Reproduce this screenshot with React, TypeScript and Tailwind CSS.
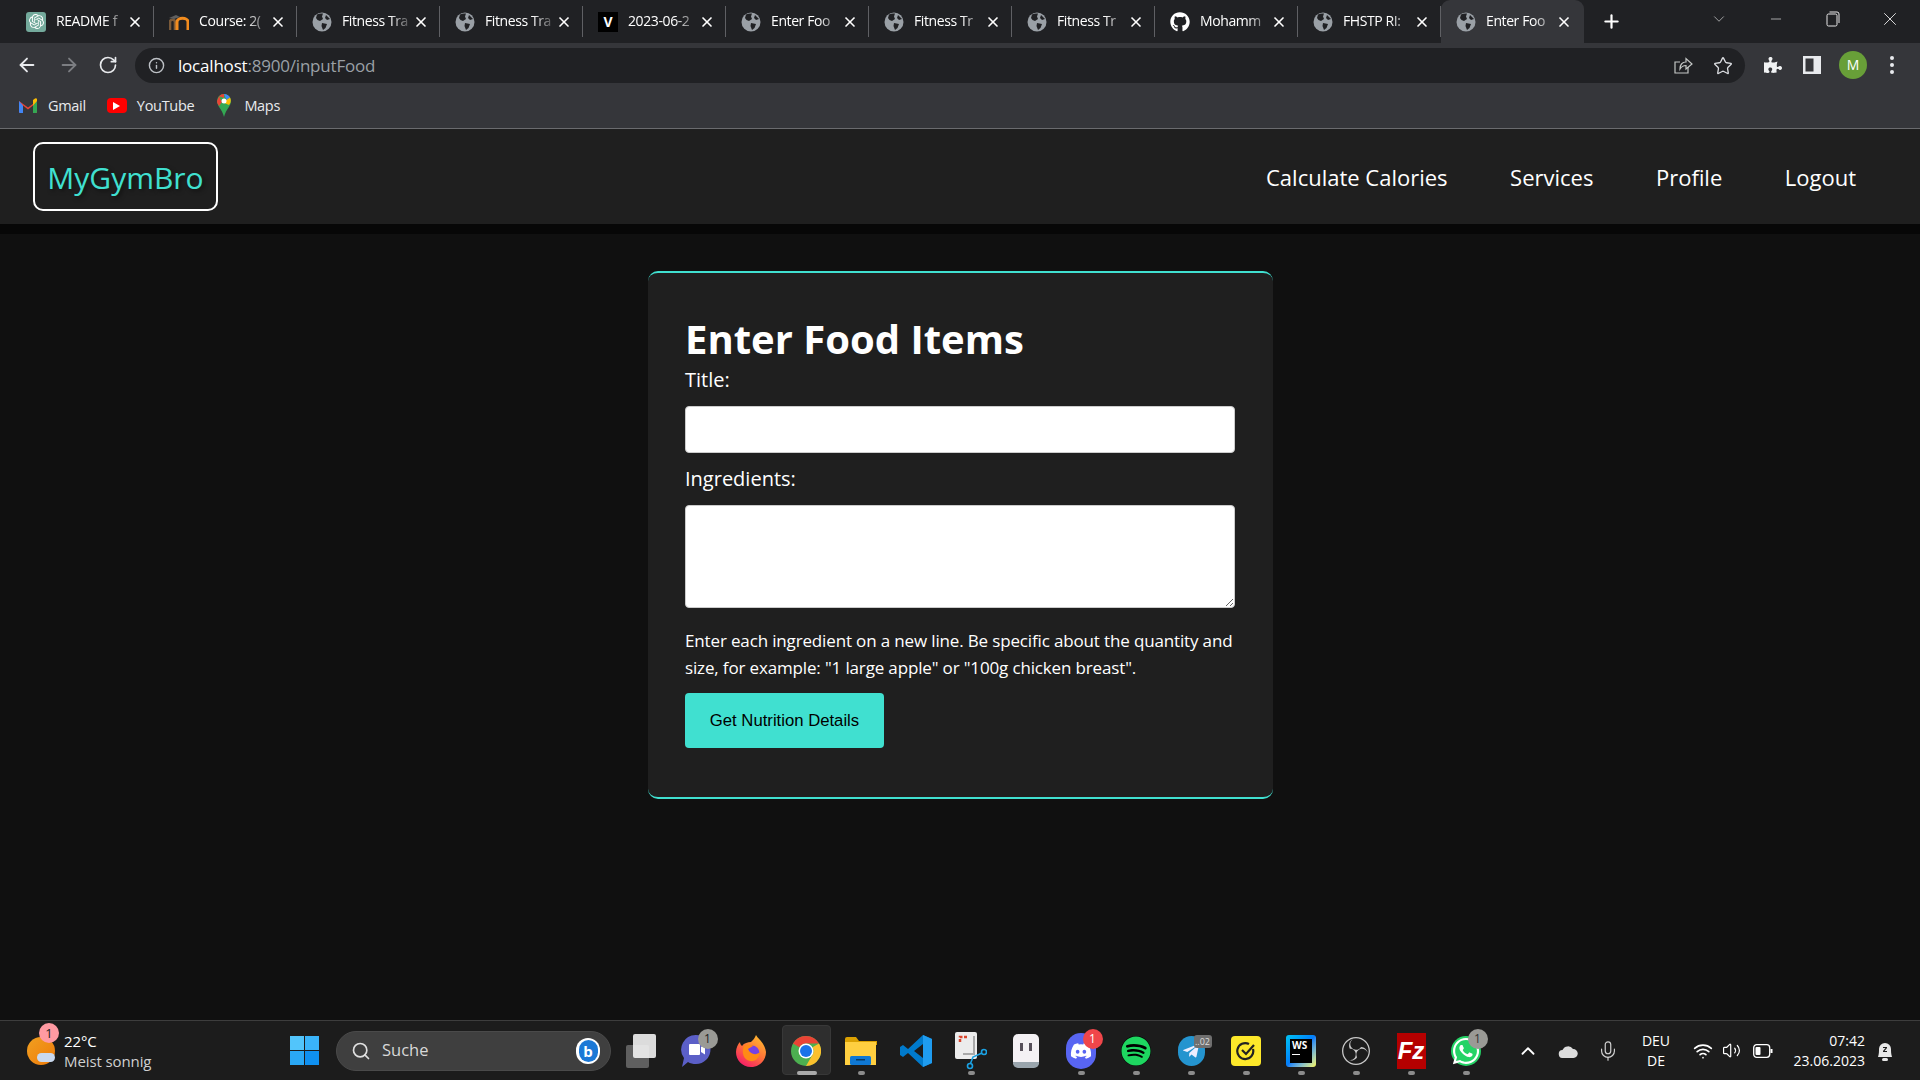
import React from 'react';
import { ArrowLeft, ArrowRight, RotateCw, Info, Star, X, Plus, ChevronDown, Minus, ChevronUp, Mic, Search, Wifi, Volume2 } from 'lucide-react';
import { FaGithub, FaDiscord, FaSpotify, FaTelegramPlane, FaWhatsapp, FaPuzzlePiece } from 'react-icons/fa';
import { SiOpenai, SiObsstudio } from 'react-icons/si';

const UI_FONT = "font-['Open_Sans',sans-serif]";

// --- favicon ---
const Globe = () => (
  <svg width="20" height="20" viewBox="0 0 20 20">
    <circle cx="10" cy="10" r="9.5" fill="#9aa0a6" />
    <path d="M5 2.5 C7 1.5 9 1.2 11 1.6 L10 4.5 L11 7 L8 9 L5.5 8 L4 6 Z M10 11 L15 12 L13.5 16 L11 18 L9.5 14 Z M14 3 L18 7 L15 8 L13 6 Z" fill="#202124" />
  </svg>
);

const Moodle = () => (
  <svg width="20" height="16" viewBox="0 0 20 16" fill="none">
    <path d="M1 16 V8 C1 5 6 5 6 8 V16" stroke="#7a5a3a" strokeWidth="2.6" />
    <path d="M8 16 V8 C8 3 19 3 19 8 V16" stroke="#f28c1e" strokeWidth="3" />
    <path d="M0 4 L7 1 L11 3 L5 5 Z" fill="#5f5f5f" />
  </svg>
);

// --- 标签页 ---
const tabs: { title: string; icon: React.ReactNode }[] = [
  { title: 'README f', icon: <span className="w-5 h-5 rounded-[3px] bg-[#74aa9c] flex items-center justify-center"><SiOpenai size={15} color="#fff" /></span> },
  { title: 'Course: 2(', icon: <Moodle /> },
  { title: 'Fitness Tra', icon: <Globe /> },
  { title: 'Fitness Tra', icon: <Globe /> },
  { title: '2023-06-2', icon: <span className="w-5 h-5 bg-black text-white text-[14px] font-bold leading-5 text-center">V</span> },
  { title: 'Enter Foo', icon: <Globe /> },
  { title: 'Fitness Tr', icon: <Globe /> },
  { title: 'Fitness Tr', icon: <Globe /> },
  { title: 'Mohamm', icon: <FaGithub size={20} color="#fff" /> },
  { title: 'FHSTP RI:', icon: <Globe /> },
];

const Tab: React.FC<{ title: string; icon: React.ReactNode; active?: boolean }> = ({ title, icon, active }) => (
  <div className={`w-[143px] h-[43px] shrink-0 flex items-center pl-[15px] pr-[12px] ${active ? 'bg-[#35363a] rounded-t-[9px]' : ''}`}>
    <span className="w-5 h-5 shrink-0 flex items-center justify-center">{icon}</span>
    <span className="ml-[10px] -mt-[2px] w-[66px] whitespace-nowrap text-[14px] text-white tracking-[-0.4px] [mask-image:linear-gradient(90deg,#000_72%,rgba(0,0,0,0.25))]">{title}</span>
    <X size={16} strokeWidth={2.5} className="ml-auto text-white shrink-0" />
    {!active && <span className="ml-[10px] -mr-[12px] w-px h-[31px] bg-[#5f6064] shrink-0" />}
  </div>
);

const TopBar = () => (
  <div className={`h-[43px] bg-[#202124] flex items-center pl-[11px] shrink-0 ${UI_FONT}`}>
    {tabs.map((t, i) => <Tab key={i} title={t.title} icon={t.icon} />)}
    <Tab title="Enter Foo" icon={<Globe />} active />
    <Plus size={21} strokeWidth={2.5} className="ml-[17px] text-white" />
    <ChevronDown size={18} strokeWidth={1} className="ml-[88px] -mt-[5px] text-[#c8c9cb]" />
    <Minus size={16} strokeWidth={1} className="ml-[40px] -mt-[5px] text-[#e8e8e8]" />
    <svg width="14" height="16" viewBox="0 0 14 16" fill="none" stroke="#e8e8e8" className="ml-[42px] -mt-[5px]"><rect x="1" y="3" width="10" height="12" rx="1.5" /><path d="M3.5 1 H11 a2 2 0 0 1 2 2 V12" /></svg>
    <X size={22} strokeWidth={1} className="ml-[39px] -mt-[5px] text-[#e8e8e8]" />
  </div>
);

const Toolbar = () => (
  <div className={`h-[40px] bg-[#35363a] flex items-start shrink-0 pt-[5px] ${UI_FONT}`}>
    <ArrowLeft size={22} strokeWidth={2} className="ml-[16px] mt-[6px] text-[#e8eaed]" />
    <ArrowRight size={22} strokeWidth={2} className="ml-[20px] mt-[6px] text-[#7c7e82]" />
    <RotateCw size={20} strokeWidth={2} className="ml-[18px] mt-[7px] text-[#e8eaed]" />
    <div className="ml-[17px] w-[1610px] h-[35px] rounded-full bg-[#202124] flex items-center pl-[13px] pr-[10px]">
      <Info size={17} strokeWidth={2} className="text-[#bdc1c6]" />
      <span className="ml-[13px] text-[17px] tracking-[-0.2px] text-white">localhost<span className="text-[#9aa0a6]">:8900/inputFood</span></span>
      <svg width="20" height="20" viewBox="0 0 20 20" fill="none" stroke="#c4c7c5" strokeWidth="1.2" className="ml-auto mr-[20px]">
        <path d="M15 11 V17 H2 V6 H7" /><path d="M7 13 C7 8 10 6 13 6 V2.5 L19 8 L13 13 V9.5 C10.5 9.5 8.5 10.5 7 13 Z" />
      </svg>
      <Star size={20} strokeWidth={1.6} className="mr-[2px] text-[#dadce0]" />
    </div>
    <FaPuzzlePiece size={18} color="#f1f3f4" className="ml-[19px] mt-[8px]" />
    <svg width="18" height="18" viewBox="0 0 18 18" className="ml-[21px] mt-[8px]"><rect width="18" height="18" fill="#e8eaed" /><rect x="2.5" y="2.5" width="8" height="13" fill="#35363a" /></svg>
    <span className="ml-[18px] mt-[3px] w-[28px] h-[28px] rounded-full bg-[#689f38] text-white text-[14px] leading-[28px] text-center">M</span>
    <svg width="6" height="20" viewBox="0 0 6 20" fill="#e8eaed" className="ml-[22px] mt-[7px]"><circle cx="3" cy="3" r="2" /><circle cx="3" cy="10" r="2" /><circle cx="3" cy="17" r="2" /></svg>
  </div>
);

const BookmarksBar = () => (
  <div className={`h-[46px] bg-[#35363a] flex items-center shrink-0 border-b border-[#6a6b6e] text-[14.5px] text-[#e8eaed] tracking-[-0.3px] ${UI_FONT}`}>
    <svg width="18" height="15" viewBox="0 0 18 15" className="ml-[19px]">
      <path d="M0 3 L9 9.5 L18 3 V14 A1 1 0 0 1 17 15 H14 V7.5 L9 11.5 L4 7.5 V15 H1 A1 1 0 0 1 0 14 Z" fill="#ea4335" />
      <path d="M0 3 V14 A1 1 0 0 0 1 15 H4 V7.5 Z" fill="#4285f4" />
      <path d="M18 3 V14 A1 1 0 0 1 17 15 H14 V7.5 Z" fill="#34a853" />
      <path d="M14 7.5 V2 L16 0.5 A1.3 1.3 0 0 1 18 2 V3 Z" fill="#fbbc04" />
    </svg>
    <span className="ml-[11px]">Gmail</span>
    <span className="ml-[21px] w-[20px] h-[15px] rounded-[4px] bg-[#f00] flex items-center justify-center">
      <svg width="7" height="8" viewBox="0 0 7 8"><path d="M0 0 L7 4 L0 8 Z" fill="#fff" /></svg>
    </span>
    <span className="ml-[10px]">YouTube</span>
    <svg width="14" height="23" viewBox="0 0 14 23" className="ml-[23px]">
      <path d="M7 0 A7 7 0 0 1 14 7 C14 12 9 15 7 23 C5 15 0 12 0 7 A7 7 0 0 1 7 0 Z" fill="#34a853" />
      <path d="M2 2.2 A7 7 0 0 1 7 0 L7 4 Z M2 2.2 L0 7 C0 9 1 10.5 2 12 L5 8 Z" fill="#ea4335" />
      <path d="M7 0 A7 7 0 0 1 13 3.5 L9.5 6 Z" fill="#4285f4" />
      <path d="M13 3.5 A7 7 0 0 1 12 11 L5 8 L9.5 6 Z" fill="#fbbc04" />
      <circle cx="7" cy="7" r="2.5" fill="#fff" />
    </svg>
    <span className="ml-[13px]">Maps</span>
  </div>
);

// --- 页面导航 ---
const NavBar = () => (
  <div className={`h-[95px] bg-[#1f1f1f] flex items-center shrink-0 pl-[33px] ${UI_FONT}`}>
    <div className="w-[185px] h-[69px] border-2 border-white rounded-[10px] flex items-center justify-center pt-[2px] text-[30px] text-[#40e0d0] [text-shadow:2px_2px_4px_rgba(0,0,0,0.5)]">MyGymBro</div>
    <nav className="ml-auto mr-[64px] pt-[2px] flex gap-[62.5px] text-[22px] text-white">
      <span>Calculate Calories</span>
      <span>Services</span>
      <span>Profile</span>
      <span>Logout</span>
    </nav>
  </div>
);

const FoodForm = () => (
  <div className={`flex-1 bg-[#101010] flex flex-col text-white ${UI_FONT}`}>
    {/* nav 下方的暗带 */}
    <div className="h-[10px] bg-[#070707] shrink-0" />
    <div className="flex justify-center pt-[37px]">
      <div className="w-[625px] h-[528px] bg-[#1f1f1f] border-y-2 border-[#40e0d0] rounded-[10px] pl-[37.5px] pr-[37px] pt-[38px]">
        <h1 className="text-[40px] leading-[55px] font-bold">Enter Food Items</h1>
        <label className="block text-[20px] leading-[27px] h-[27px]">Title:</label>
        <input className="block mt-[13px] w-[550px] h-[47px] bg-white rounded-[4px] border border-[#ccc]" />
        <label className="block mt-[12px] text-[20px] leading-[27px] h-[27px]">Ingredients:</label>
        <textarea className="block mt-[13px] w-[550px] h-[103px] bg-white rounded-[4px] border border-[#ccc]" />
        <p className="mt-[19px] text-[17px] tracking-[-0.15px] leading-[27px] w-[552px]">Enter each ingredient on a new line. Be specific about the quantity and size, for example: "1 large apple" or "100g chicken breast".</p>
        <button className="mt-[12px] w-[199px] h-[55px] bg-[#40e0d0] rounded-[4px] text-black text-[16.7px] font-['Liberation_Sans',sans-serif]">Get Nutrition Details</button>
      </div>
    </div>
  </div>
);

// --- 任务栏图标 ---
const Chrome = () => (
  <svg width="30" height="30" viewBox="0 0 30 30">
    <circle cx="15" cy="15" r="15" fill="#4caf50" />
    <path d="M15 0 A15 15 0 0 1 28 7.5 H15 A7.5 7.5 0 0 0 8.5 11.2 L2 7.5 A15 15 0 0 1 15 0 Z" fill="#ea4335" />
    <path d="M28 7.5 A15 15 0 0 1 15 30 L21.5 18.7 A7.5 7.5 0 0 0 21.5 11.2 Z" fill="#fbc02d" />
    <circle cx="15" cy="15" r="7.5" fill="#fff" />
    <circle cx="15" cy="15" r="6" fill="#1a73e8" />
  </svg>
);

const Firefox = () => (
  <svg width="30" height="32" viewBox="0 0 30 32">
    <defs>
      <linearGradient id="ffOuter" x1="0.8" y1="0" x2="0.2" y2="1">
        <stop offset="0" stopColor="#ffbd2e" />
        <stop offset="0.5" stopColor="#ff7139" />
        <stop offset="1" stopColor="#f5156c" />
      </linearGradient>
    </defs>
    <path d="M20 0 C22 4 29 8 30 17 C30 26 23 32 15 32 C6 32 0 25 0 17 C0 13 2 9 4 7 C4 9 5 10 6 11 C8 8 12 7 15 7 C17 5 19 3 20 0 Z" fill="url(#ffOuter)" />
    <circle cx="16" cy="18" r="7.5" fill="#7542e5" />
    <path d="M8 11 C11 9 15 9 17 11 L12 14 C14 19 20 21 24 17 C24 23 19 27 14 26 C8 25 5 18 8 11 Z" fill="#ff8a16" />
  </svg>
);

const taskIcons: { icon: React.ReactNode; badge?: string; badgeClass?: string; dot?: boolean; active?: boolean }[] = [
  { icon: <span className="relative w-[30px] h-[34px]"><span className="absolute left-0 bottom-0 w-[23px] h-[23px] rounded-[2px] bg-[#5f5f5f]" /><span className="absolute right-0 top-0 w-[23px] h-[24px] rounded-[2px] bg-[#f2f2f2] opacity-90" /></span> },
  { icon: (
    <svg width="30" height="34" viewBox="0 0 30 34">
      <path d="M15 1 A14.5 14.5 0 0 1 15 30 C12 30 9 29.500 7 28 L1 33 L3 24 A14.500 14.500 0 0 1 15 1 Z" fill="#5b5fc7" />
      <rect x="8" y="10" width="11" height="11" rx="1" fill="#fff" />
      <path d="M20 13 L24 10.500 V20.500 L20 18 Z" fill="#fff" />
    </svg>
  ), badge: '1', badgeClass: 'bg-[#9a9a96] text-[#222]' },
  { icon: <Firefox /> },
  { icon: <Chrome />, active: true },
  { icon: (
    <svg width="32" height="28" viewBox="0 0 32 28">
      <path d="M0 2 A2 2 0 0 1 2 0 H11 L14 4 H32 V8 H0 Z" fill="#dba102" />
      <rect y="5" width="31" height="23" fill="#ffcf40" />
      <rect x="5" y="19" width="21" height="9" rx="1.5" fill="#0f78d4" />
      <rect x="11" y="22" width="9" height="1.5" fill="#073a66" />
    </svg>
  ), dot: true },
  { icon: (
    <svg width="32" height="32" viewBox="0 0 32 32">
      <path d="M23 0 L32 4 V28 L23 32 L8 18 L3 22 L0 20 V12 L3 10 L8 14 Z M23 9 L14 16 L23 23 Z" fill="#007acc" />
      <path d="M23 0 L32 4 V28 L23 32 Z" fill="#1f9cf0" />
    </svg>
  ) },
  { icon: (
    <svg width="32" height="38" viewBox="0 0 32 38" fill="none">
      <rect x="0" y="0" width="22" height="27" rx="2" fill="#ececec" />
      <path d="M5 10 V5 H13" stroke="#d9442c" strokeWidth="2.5" strokeDasharray="3 1.5" />
      <path d="M19 4 V22 H8" stroke="#a9a9a9" strokeWidth="2" />
      <circle cx="29" cy="20" r="2.5" stroke="#1ba1e2" strokeWidth="1.6" />
      <circle cx="15" cy="34" r="2.5" stroke="#1ba1e2" strokeWidth="1.6" />
      <path d="M27 21 L18 25 L15.5 31.5" stroke="#1ba1e2" strokeWidth="1.6" />
    </svg>
  ), dot: true },
  { icon: (
    <span className="relative w-[26px] h-[34px] rounded-[5px] bg-[#f4f1f4] border-b-[6px] border-[#9aa5ad] flex justify-center gap-[6px] pt-[9px]">
      <span className="w-[3px] h-[8px] bg-[#57505a]" /><span className="w-[3px] h-[8px] bg-[#57505a]" />
    </span>
  ) },
  { icon: <span className="w-[30px] h-[36px] rounded-full bg-[#5865f2] flex items-center justify-center"><FaDiscord size={22} color="#fff" /></span>, badge: '1', badgeClass: 'bg-[#f0464a] text-white', dot: true },
  { icon: <span className="w-[30px] h-[30px] rounded-full bg-black flex items-center justify-center"><FaSpotify size={30} color="#1ed760" /></span>, dot: true },
  { icon: <span className="w-[27px] h-[30px] rounded-full bg-[#2494cf] flex items-center justify-center"><FaTelegramPlane size={18} color="#eef" /></span>, badge: '..02', badgeClass: 'bg-[#6f6f6f] text-[#ddd] !w-[18px] !h-[13px] !rounded-[3px] !text-[9px] !leading-[13px] !right-[7px] !top-[14px]', dot: true },
  { icon: (
    <span className="w-[30px] h-[30px] rounded-[4px] bg-[#fde82a] flex items-center justify-center">
      <svg width="20" height="20" viewBox="0 0 20 20" fill="none" stroke="#222" strokeWidth="2.2"><path d="M17 8 A8 8 0 1 1 13 3" /><path d="M6 9 L10 13 L18 4" /></svg>
    </span>
  ), dot: true },
  { icon: (
    <span className="w-[30px] h-[32px] rounded-[3px] bg-gradient-to-br from-[#07c3f2] via-[#087cfa] to-[#fcf84a] p-[4px]">
      <span className="block w-full h-full bg-black text-white text-[10px] font-bold leading-[12px] pl-[2px]">WS<span className="block w-[8px] h-[1.5px] bg-white mt-[3px]" /></span>
    </span>
  ), dot: true },
  { icon: <SiObsstudio size={28} color="#c8c8c8" />, dot: true },
  { icon: <span className="w-[29px] h-[36px] bg-[#b50000] text-white text-[24px] font-bold italic leading-[36px] text-center font-['Liberation_Sans',sans-serif]">Fz</span>, dot: true },
  { icon: <span className="w-[30px] h-[30px] rounded-full bg-[#25d366] flex items-center justify-center"><FaWhatsapp size={30} color="#fff" /></span>, badge: '1', badgeClass: 'bg-[#9a9a96] text-[#333]', dot: true },
];

const Taskbar = () => (
  <div className={`h-[60px] bg-[#1c1c1c] border-t border-[#3d3d3d] flex items-center shrink-0 text-white ${UI_FONT}`}>
    <div className="w-[277px] shrink-0 flex items-center pl-[27px]">
      <span className="relative w-[28px] h-[28px] rounded-full bg-gradient-to-br from-[#f0a020] to-[#ee7a08] shrink-0">
        <span className="absolute left-[10px] bottom-[3px] w-[18px] h-[9px] rounded-full bg-[#c9d8ee]" />
        <span className="absolute -right-[4px] -top-[14px] w-[20px] h-[20px] rounded-full bg-[#ff9aa2] text-[#222] text-[13px] leading-[20px] text-center">1</span>
      </span>
      <div className="ml-[9px] text-[15px] leading-[20px] tracking-[-0.1px]">
        <div>22°C</div>
        <div className="text-[#d0d0d0]">Meist sonnig</div>
      </div>
    </div>
    <div className="w-[55px] shrink-0 flex justify-center">
      <svg width="29" height="29" viewBox="0 0 29 29">
        <rect width="14" height="14" fill="#52c5fb" /><rect x="15" width="14" height="14" fill="#3ab4fa" />
        <rect y="15" width="14" height="14" fill="#2aa8f5" /><rect x="15" y="15" width="14" height="14" fill="#0f90f0" />
      </svg>
    </div>
    <div className="ml-[4px] w-[275px] h-[40px] shrink-0 rounded-full bg-[#3f3f3f] border border-[#4a4a4a] flex items-center pl-[14px] pr-[10px]">
      <Search size={20} strokeWidth={2} className="text-[#e0e0e0]" />
      <span className="ml-[11px] text-[16.5px] text-[#d8d8d8]">Suche</span>
      <span className="ml-auto w-[24px] h-[26px] rounded-full bg-white flex items-center justify-center">
        <span className="w-[19px] h-[22px] rounded-full bg-[#1b78d6] text-white text-[15px] font-bold leading-[22px] text-center">b</span>
      </span>
    </div>
    <div className="ml-[2.5px] flex shrink-0">
      {taskIcons.map((t, i) => (
        <div key={i} className="w-[55px] h-[59px] flex items-center justify-center relative">
          {t.active && <span className="absolute inset-x-[3px] top-[4px] bottom-[5px] rounded-[4px] bg-[#2e2e2e] border border-[#383838]" />}
          <span className="relative flex items-center justify-center">{t.icon}</span>
          {t.badge && <span className={`absolute top-[8px] right-[6px] w-[20px] h-[20px] rounded-full text-[12px] leading-[20px] text-center ${t.badgeClass}`}>{t.badge}</span>}
          {t.dot && <span className="absolute bottom-[5px] left-[24px] w-[7px] h-[4px] rounded-full bg-[#8c8c8c]" />}
          {t.active && <span className="absolute bottom-[5px] left-[18px] w-[20px] h-[4px] rounded-full bg-[#aaa]" />}
        </div>
      ))}
    </div>
    <div className="ml-[14.5px] flex items-center shrink-0">
      <div className="w-[40px] flex justify-center"><ChevronUp size={22} strokeWidth={2} /></div>
      <div className="w-[40px] flex justify-center">
        <svg width="20" height="14" viewBox="0 0 20 14" fill="#dcdcdc"><path d="M5 14 A4 4 0 0 1 4.5 6 A6 6 0 0 1 15 5 A4.5 4.5 0 0 1 15.5 14 Z" /></svg>
      </div>
      <div className="w-[40px] flex justify-center"><Mic size={22} strokeWidth={1.3} className="text-[#d0d0d0]" /></div>
      <div className="w-[56px] text-center text-[14px] leading-[20px]"><div>DEU</div><div>DE</div></div>
      <div className="ml-[5px] w-[28px] flex justify-center"><Wifi size={20} strokeWidth={2} /></div>
      <div className="w-[28px] flex justify-center"><Volume2 size={19} strokeWidth={1.5} /></div>
      <div className="w-[36px] flex justify-center">
        <svg width="20" height="14" viewBox="0 0 20 14" fill="none" stroke="#fff" strokeWidth="1.3"><rect x="0.7" y="0.7" width="16" height="12.6" rx="3" /><rect x="2.5" y="3" width="5" height="8" rx="1" fill="#fff" stroke="none" /><path d="M18.5 5 V9" strokeWidth="2" /></svg>
      </div>
      <div className="w-[84px] text-right text-[14px] leading-[20px] whitespace-nowrap"><div>07:42</div><div>23.06.2023</div></div>
      <div className="ml-[6px] w-[28px] flex justify-center">
        <svg width="18" height="24" viewBox="0 0 18 24" fill="#e8e8e8"><path d="M2 18 C3 15 3 12 3 10 A6 6 0 0 1 15 10 C15 12 15 15 16 18 Z" /><rect x="6" y="19" width="6" height="3" rx="1.5" /><path d="M7 8 H11 V9 L8.5 12 H11 V13 H7 V12 L9.5 9 H7 Z" fill="#1c1c1c" /></svg>
      </div>
    </div>
  </div>
);

const App: React.FC = () => (
  <div className="h-screen w-full flex flex-col overflow-hidden bg-[#101010]">
    <TopBar />
    <Toolbar />
    <BookmarksBar />
    <NavBar />
    <FoodForm />
    <Taskbar />
  </div>
);

export default App;
